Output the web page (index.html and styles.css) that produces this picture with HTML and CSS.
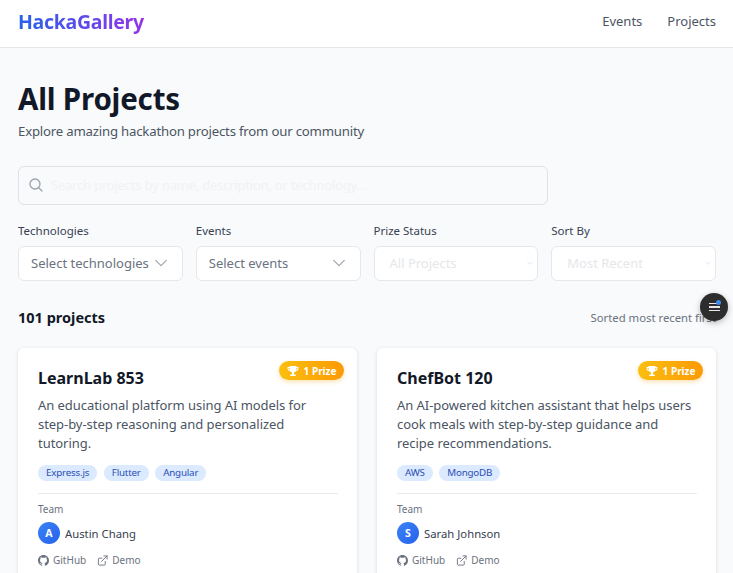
FILE: index.html
```html
<!DOCTYPE html>
<html lang="en">
<head>
  <meta charset="UTF-8" />
  <title>HackaGallery</title>
  <link rel="stylesheet" href="styles.css">
</head>
<body>
  <header class="topbar">
    <a class="brand">HackaGallery</a>
    <nav class="topnav">
      <a>Events</a>
      <a>Projects</a>
    </nav>
  </header>

  <main class="page">
    <h1>All Projects</h1>
    <p class="subtitle">Explore amazing hackathon projects from our community</p>

    <div class="search">
      <svg class="search-icon" viewBox="0 0 24 24" fill="none" stroke="currentColor" stroke-width="2" stroke-linecap="round"><circle cx="10.5" cy="10.5" r="7.5"/><path d="M21 21l-5-5"/></svg>
      <span class="search-text">Search projects by name, description, or technology...</span>
    </div>

    <div class="filters">
      <div class="filter">
        <label>Technologies</label>
        <div class="select">
          <span>Select technologies</span>
          <svg class="chev" viewBox="0 0 24 24" fill="none" stroke="currentColor" stroke-width="1.700" stroke-linecap="round" stroke-linejoin="round"><path d="M4 8l8 8 8-8"/></svg>
        </div>
      </div>
      <div class="filter">
        <label>Events</label>
        <div class="select">
          <span>Select events</span>
          <svg class="chev" viewBox="0 0 24 24" fill="none" stroke="currentColor" stroke-width="1.700" stroke-linecap="round" stroke-linejoin="round"><path d="M4 8l8 8 8-8"/></svg>
        </div>
      </div>
      <div class="filter">
        <label>Prize Status</label>
        <div class="select select-faded">
          <span>All Projects</span>
          <svg class="chev-small" viewBox="0 0 24 24" fill="none" stroke="currentColor" stroke-width="2" stroke-linecap="round" stroke-linejoin="round"><path d="M5 9l7 7 7-7"/></svg>
        </div>
      </div>
      <div class="filter">
        <label>Sort By</label>
        <div class="select select-faded">
          <span>Most Recent</span>
          <svg class="chev-small" viewBox="0 0 24 24" fill="none" stroke="currentColor" stroke-width="2" stroke-linecap="round" stroke-linejoin="round"><path d="M5 9l7 7 7-7"/></svg>
        </div>
      </div>
    </div>

    <div class="results-bar">
      <h2>101 projects</h2>
      <span class="sorted">Sorted most recent first</span>
    </div>

    <div class="grid">
      <article class="card">
        <span class="prize">
          <svg viewBox="0 0 24 24" fill="currentColor"><path d="M5 2h14v2h4v2.500c0 3-2 5.300-5 5.700-1 1.600-2.300 2.600-4 3V19h3.500v3h-11v-3H10v-3.800c-1.700-.4-3-1.400-4-3-3-.4-5-2.700-5-5.700V4h4V2zM3 6v.5c0 1.700.9 3 2.500 3.500C5.200 8.900 5 7.500 5 6H3zm18 0h-2c0 1.500-.2 2.900-.5 4 1.600-.5 2.500-1.800 2.500-3.500V6z"/></svg>
          1 Prize
        </span>
        <h3>LearnLab 853</h3>
        <p class="desc">An educational platform using AI models for step-by-step reasoning and personalized tutoring.</p>
        <div class="tags">
          <span class="tag">Express.js</span>
          <span class="tag">Flutter</span>
          <span class="tag">Angular</span>
        </div>
        <div class="team">
          <div class="team-label">Team</div>
          <div class="member">
            <span class="avatar">A</span>
            <span>Austin Chang</span>
          </div>
          <div class="links">
            <a><svg class="gh" viewBox="0 0 16 16" fill="currentColor"><path d="M8 0C3.580 0 0 3.580 0 8c0 3.540 2.290 6.530 5.470 7.590.4.070.55-.170.55-.380 0-.190-.010-.820-.010-1.490-2.010.370-2.530-.490-2.690-.940-.090-.230-.480-.940-.820-1.130-.280-.150-.680-.520-.010-.530.630-.010 1.080.580 1.230.820.720 1.210 1.870.870 2.330.660.070-.520.280-.870.510-1.070-1.780-.200-3.640-.890-3.640-3.950 0-.870.310-1.590.820-2.150-.080-.200-.360-1.020.080-2.120 0 0 .670-.210 2.200.820.640-.180 1.320-.270 2-.270s1.360.090 2 .270c1.530-1.040 2.200-.820 2.200-.820.440 1.100.160 1.920.080 2.120.510.560.820 1.270.820 2.150 0 3.070-1.870 3.750-3.650 3.950.290.250.540.730.540 1.480 0 1.070-.010 1.930-.010 2.200 0 .210.150.460.550.380A8.010 8.010 0 0 0 16 8c0-4.420-3.580-8-8-8z"/></svg>GitHub</a>
            <a><svg class="ext" viewBox="0 0 24 24" fill="none" stroke="currentColor" stroke-width="2" stroke-linecap="round" stroke-linejoin="round"><path d="M18 14v6a2 2 0 0 1-2 2H5a2 2 0 0 1-2-2V9a2 2 0 0 1 2-2h6"/><path d="M15 2h7v7"/><path d="M10 14L22 2"/></svg>Demo</a>
          </div>
        </div>
      </article>

      <article class="card">
        <span class="prize">
          <svg viewBox="0 0 24 24" fill="currentColor"><path d="M5 2h14v2h4v2.500c0 3-2 5.300-5 5.700-1 1.600-2.300 2.600-4 3V19h3.500v3h-11v-3H10v-3.800c-1.700-.4-3-1.400-4-3-3-.4-5-2.700-5-5.700V4h4V2zM3 6v.5c0 1.700.9 3 2.500 3.500C5.200 8.900 5 7.500 5 6H3zm18 0h-2c0 1.500-.2 2.900-.5 4 1.600-.5 2.500-1.800 2.500-3.500V6z"/></svg>
          1 Prize
        </span>
        <h3>ChefBot 120</h3>
        <p class="desc">An AI-powered kitchen assistant that helps users cook meals with step-by-step guidance and recipe recommendations.</p>
        <div class="tags">
          <span class="tag">AWS</span>
          <span class="tag">MongoDB</span>
        </div>
        <div class="team">
          <div class="team-label">Team</div>
          <div class="member">
            <span class="avatar">S</span>
            <span>Sarah Johnson</span>
          </div>
          <div class="links">
            <a><svg class="gh" viewBox="0 0 16 16" fill="currentColor"><path d="M8 0C3.580 0 0 3.580 0 8c0 3.540 2.290 6.530 5.470 7.590.4.070.55-.170.55-.380 0-.190-.010-.820-.010-1.490-2.010.370-2.530-.490-2.690-.940-.090-.230-.480-.940-.820-1.130-.280-.150-.680-.520-.010-.530.630-.010 1.080.580 1.230.820.720 1.210 1.870.870 2.330.660.070-.520.280-.870.510-1.070-1.780-.200-3.640-.890-3.640-3.950 0-.870.310-1.590.820-2.150-.080-.200-.360-1.020.080-2.120 0 0 .670-.210 2.200.820.640-.180 1.320-.270 2-.270s1.360.090 2 .270c1.530-1.040 2.200-.820 2.200-.820.440 1.100.160 1.920.080 2.120.510.560.820 1.270.820 2.150 0 3.070-1.870 3.750-3.650 3.950.290.250.540.730.540 1.480 0 1.070-.010 1.930-.010 2.200 0 .210.150.460.550.380A8.010 8.010 0 0 0 16 8c0-4.420-3.580-8-8-8z"/></svg>GitHub</a>
            <a><svg class="ext" viewBox="0 0 24 24" fill="none" stroke="currentColor" stroke-width="2" stroke-linecap="round" stroke-linejoin="round"><path d="M18 14v6a2 2 0 0 1-2 2H5a2 2 0 0 1-2-2V9a2 2 0 0 1 2-2h6"/><path d="M15 2h7v7"/><path d="M10 14L22 2"/></svg>Demo</a>
          </div>
        </div>
      </article>
    </div>
  </main>

  <button class="fab" type="button" aria-label="Menu">
    <span class="fab-dot"></span>
    <span class="fab-line fab-line-short"></span>
    <span class="fab-line"></span>
    <span class="fab-line"></span>
  </button>
</body>
</html>
```

FILE: styles.css
```css
html, body {
  height: 573px;
  overflow: hidden;
}

body {
  margin: 0;
  background-color: #f9fafb;
  font-family: "Noto Sans", "Open Sans", sans-serif;
  color: #111827;
}

.topbar {
  display: flex;
  align-items: center;
  justify-content: space-between;
  height: 47px;
  padding: 0 17px 0 18px;
  background: #fff;
  border-bottom: 1px solid #e5e7eb;
}

.brand {
  margin-bottom: 5px;
  font-size: 19.500px;
  letter-spacing: -0.3px;
  font-weight: 700;
  background: linear-gradient(90deg, #2563eb, #9333ea);
  -webkit-background-clip: text;
  background-clip: text;
  color: transparent;
}

.topnav {
  display: flex;
  gap: 25px;
  margin-bottom: 6px;
  font-size: 13px;
  color: #4b5563;
}

.page {
  padding: 30px 17px 0 18px;
}

h1 {
  margin: 0;
  font-size: 29.500px;
  letter-spacing: -0.2px;
  line-height: 42px;
  font-weight: 700;
  color: #111827;
}

.subtitle {
  margin: 1px 0 0;
  font-size: 13.200px;
  letter-spacing: -0.2px;
  line-height: 20px;
  color: #4b5563;
}

.search {
  display: flex;
  align-items: center;
  gap: 7px;
  width: 530px;
  height: 39px;
  box-sizing: border-box;
  margin-top: 25px;
  padding: 0 0 2px 9px;
  background: #f9fafb;
  border: 1px solid #dfe2e6;
  border-radius: 6px;
}

.search-icon {
  width: 16px;
  height: 16px;
  color: #9ca3af;
  flex: none;
}

.search-text {
  font-size: 13px;
  letter-spacing: -0.2px;
  color: #f1f2f4;
  white-space: nowrap;
}

.filters {
  display: grid;
  grid-template-columns: repeat(4, 1fr);
  gap: 13px;
  margin-top: 17px;
}

.filter label {
  display: block;
  font-size: 11.500px;
  line-height: 18px;
  margin-bottom: 6px;
  color: #374151;
}

.select {
  display: flex;
  align-items: center;
  justify-content: space-between;
  height: 35px;
  box-sizing: border-box;
  padding: 0 13px 2px 12px;
  background: #fff;
  border: 1px solid #e5e7eb;
  border-radius: 6px;
  font-size: 13px;
  color: #6b7280;
}

.select-faded {
  padding: 0 3px 2px 15px;
  color: #e5e7eb;
}

.chev {
  width: 16px;
  height: 16px;
  color: #9ca3af;
  flex: none;
}

.chev-small {
  width: 8px;
  height: 8px;
  color: #d8dbe0;
  flex: none;
}

.results-bar {
  display: flex;
  align-items: center;
  justify-content: space-between;
  margin-top: 26px;
  height: 20px;
}

h2 {
  margin: 0;
  font-size: 14.500px;
  font-weight: 700;
  color: #111827;
}

.sorted {
  font-size: 11.300px;
  color: #6b7280;
  white-space: nowrap;
}

.grid {
  display: grid;
  grid-template-columns: repeat(2, 1fr);
  gap: 20px;
  margin-top: 21px;
}

.card {
  position: relative;
  padding: 19px 19px 20px 20px;
  background: #fff;
  border-radius: 6px;
  box-shadow: 0 1px 4px rgba(0, 0, 0, 0.12);
}

.prize {
  position: absolute;
  top: 13px;
  right: 13.500px;
  display: flex;
  align-items: center;
  gap: 5px;
  height: 19px;
  padding: 0 7px 0 8px;
  border-radius: 10px;
  background: linear-gradient(90deg, #fbbf0f, #fb9a05);
  box-shadow: 0 2px 4px rgba(245, 158, 11, 0.3);
  color: #fff;
  font-size: 10px;
  font-weight: 700;
}

.prize svg {
  width: 12px;
  height: 12px;
}

h3 {
  margin: 0;
  font-size: 16px;
  line-height: 22px;
  font-weight: 700;
  color: #111827;
}

.desc {
  margin: 7px 0 0;
  font-size: 13px;
  letter-spacing: -0.05px;
  line-height: 19px;
  color: #4b5563;
}

.tags {
  display: flex;
  gap: 6.500px;
  margin-top: 12px;
}

.tag {
  height: 16px;
  line-height: 16px;
  padding: 0 8px;
  border-radius: 8px;
  background: #dbeafe;
  color: #2b4fb5;
  font-size: 9.800px;
  letter-spacing: -0.2px;
}

.team {
  margin-top: 12px;
  padding-top: 8px;
  border-top: 1px solid #e8eaee;
}

.team-label {
  font-size: 10px;
  line-height: 14px;
  color: #6b7280;
}

.member {
  display: flex;
  align-items: center;
  gap: 5px;
  margin-top: 6px;
  font-size: 11.300px;
  color: #374151;
}

.avatar {
  display: flex;
  align-items: center;
  justify-content: center;
  width: 22px;
  height: 22px;
  border-radius: 50%;
  background: linear-gradient(135deg, #3b82f6, #2563eb);
  color: #fff;
  font-size: 10.500px;
  font-weight: 700;
}

.links {
  display: flex;
  gap: 11px;
  margin-top: 9px;
  font-size: 10px;
  color: #6b7280;
}

.links a {
  display: flex;
  align-items: center;
  gap: 4px;
}

.gh {
  width: 11px;
  height: 11px;
}

.ext {
  width: 11px;
  height: 11px;
}

.fab {
  position: fixed;
  left: 700px;
  top: 293px;
  width: 28px;
  height: 28px;
  display: flex;
  flex-direction: column;
  align-items: center;
  justify-content: center;
  gap: 2px;
  padding: 0;
  border: none;
  border-radius: 50%;
  background: #2d2d2d;
  box-shadow: 0 2px 6px rgba(0, 0, 0, 0.25);
}

.fab-line {
  display: block;
  width: 11px;
  height: 1.500px;
  background: #e8e8e8;
}

.fab-line-short {
  width: 8px;
  margin-right: 3px;
}

.fab-dot {
  position: absolute;
  top: 7px;
  right: 7px;
  width: 5px;
  height: 5px;
  border-radius: 50%;
  background: #3b8df0;
}
```
